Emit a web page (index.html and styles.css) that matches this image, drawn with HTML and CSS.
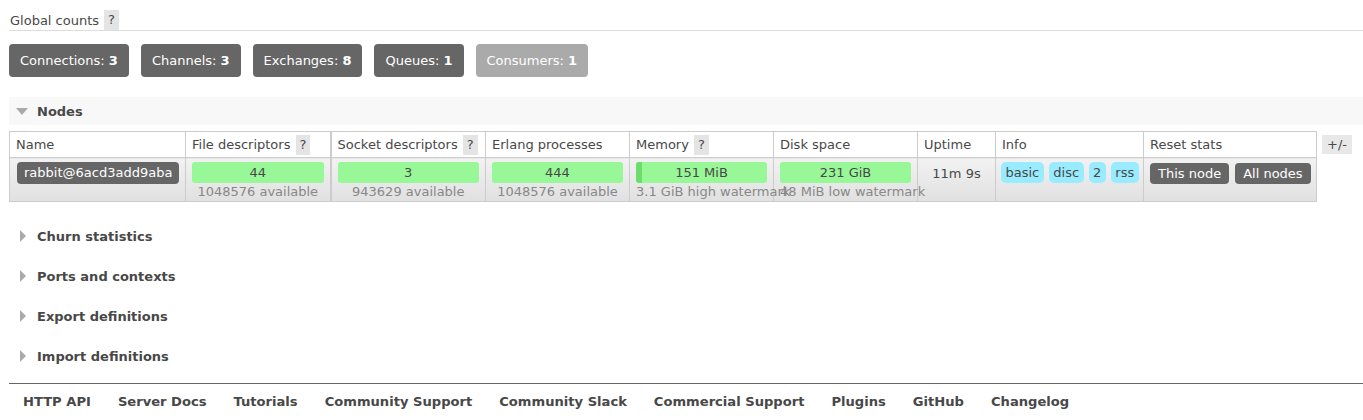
FILE: index.html
```html
<!DOCTYPE html>
<html>
<head>
<meta charset="utf-8">
<link rel="stylesheet" href="styles.css">
</head>
<body>
<div class="page">
  <div class="gc-head">
    <span class="gc-title">Global counts</span><span class="help">?</span>
  </div>
  <div class="counts">
    <span class="count">Connections: <b>3</b></span>
    <span class="count">Channels: <b>3</b></span>
    <span class="count">Exchanges: <b>8</b></span>
    <span class="count">Queues: <b>1</b></span>
    <span class="count dim">Consumers: <b>1</b></span>
  </div>

  <div class="section open">
    <span class="tri-down"></span><span class="sec-title">Nodes</span>
  </div>
  <div class="nodes">
    <table class="list">
      <colgroup>
        <col class="c-name"><col class="c-fd"><col class="c-sd"><col class="c-ep"><col class="c-mem"><col class="c-disk"><col class="c-up"><col class="c-info"><col class="c-reset">
      </colgroup>
      <thead>
        <tr>
          <th>Name</th>
          <th>File descriptors <span class="help">?</span></th>
          <th class="dbl">Socket descriptors <span class="help">?</span></th>
          <th>Erlang processes</th>
          <th>Memory <span class="help">?</span></th>
          <th>Disk space</th>
          <th>Uptime</th>
          <th>Info</th>
          <th>Reset stats</th>
        </tr>
      </thead>
      <tbody>
        <tr>
          <td><span class="node-pill">rabbit@6acd3add9aba</span></td>
          <td><div class="bar">44</div><div class="sub">1048576 available</div></td>
          <td class="dbl"><div class="bar">3</div><div class="sub">943629 available</div></td>
          <td><div class="bar">444</div><div class="sub">1048576 available</div></td>
          <td><div class="bar mem"><span class="mem-used" style="width:6px"></span>151 MiB</div><div class="sub">3.1 GiB high watermark</div></td>
          <td><div class="bar">231 GiB</div><div class="sub">48 MiB low watermark</div></td>
          <td class="uptime"><div class="uptime-text">11m 9s</div></td>
          <td><div class="badges"><span class="badge">basic</span><span class="badge">disc</span><span class="badge">2</span><span class="badge">rss</span></div></td>
          <td><div class="btns"><span class="btn">This node</span><span class="btn">All nodes</span></div></td>
        </tr>
      </tbody>
    </table>
    <span class="plusminus">+/-</span>
  </div>

  <div class="section"><span class="tri-right"></span><span class="sec-title">Churn statistics</span></div>
  <div class="section"><span class="tri-right"></span><span class="sec-title">Ports and contexts</span></div>
  <div class="section"><span class="tri-right"></span><span class="sec-title">Export definitions</span></div>
  <div class="section"><span class="tri-right"></span><span class="sec-title">Import definitions</span></div>

  <div class="footer">
    <a>HTTP API</a><a>Server Docs</a><a>Tutorials</a><a>Community Support</a><a>Community Slack</a><a>Commercial Support</a><a>Plugins</a><a>GitHub</a><a>Changelog</a>
  </div>
</div>
</body>
</html>
```
FILE: styles.css
```css
html, body {
  margin: 0;
  padding: 0;
  background: #fff;
}
body {
  font-family: "DejaVu Sans", Verdana, sans-serif;
  font-size: 13px;
  color: #484848;
}
.page {
  padding: 10px 0 0 9px;
}
.gc-head {
  display: flex;
  align-items: center;
  height: 20px;
  border-bottom: 1px solid #ddd;
  padding-left: 1px;
}
.gc-title {
  margin-right: 5px;
}
.help {
  display: inline-block;
  background: #e4e4e4;
  color: #484848;
  padding: 0 4px;
  line-height: 20px;
  height: 20px;
}
.counts {
  display: flex;
  gap: 12px;
  margin-top: 13px;
}
.count {
  background: #666;
  color: #fff;
  border-radius: 4px;
  padding: 0 11px;
  height: 33px;
  line-height: 33px;
  white-space: nowrap;
}
.count.dim {
  background: #aaa;
}
.section {
  display: flex;
  align-items: center;
  height: 28px;
  margin-top: 12px;
}
.section.open {
  background: #f8f8f8;
  margin-top: 20px;
}
.sec-title {
  font-weight: bold;
  font-size: 13px;
  color: #484848;
}
.tri-down {
  width: 0;
  height: 0;
  border-left: 6px solid transparent;
  border-right: 6px solid transparent;
  border-top: 7px solid #aaa;
  margin: 0 9px 0 7px;
}
.tri-right {
  width: 0;
  height: 0;
  border-top: 6px solid transparent;
  border-bottom: 6px solid transparent;
  border-left: 6px solid #aaa;
  margin: 0 11px 0 11px;
}
.nodes {
  display: flex;
  align-items: flex-start;
  gap: 5px;
  margin-top: 6px;
  margin-bottom: 20px;
}
table.list {
  border-collapse: collapse;
  table-layout: fixed;
  width: 1307px;
  border: 1px solid #ccc;
}
.c-name { width: 176px; }
.c-fd { width: 145px; }
.c-sd { width: 155px; }
.c-ep { width: 144px; }
.c-mem { width: 144px; }
.c-disk { width: 144px; }
.c-up { width: 78px; }
.c-info { width: 148px; }
.c-reset { width: 173px; }
table.list th {
  font-weight: normal;
  text-align: left;
  padding: 0 6px;
  height: 25px;
  border-left: 1px solid #ccc;
  border-bottom: 1px solid #ccc;
  white-space: nowrap;
  background: #fff;
}
table.list th .help {
  margin-left: 1px;
}
table.list th.dbl, table.list td.dbl {
  border-left: 2px solid #ccc;
}
table.list td {
  vertical-align: top;
  padding: 3px 6px 0 6px;
  height: 40px;
  border-left: 1px solid #ccc;
  background: linear-gradient(#f2f2f2, #e0e0e0);
  white-space: nowrap;
}
table.list td.uptime {
  text-align: center;
}
.uptime-text {
  line-height: 21px;
  margin-top: 2px;
}
.node-pill {
  display: inline-block;
  background: #666;
  color: #fff;
  border-radius: 4px;
  padding: 0 7px;
  line-height: 22px;
  margin-top: 1px;
  margin-left: 1px;
}
.bar {
  position: relative;
  background: #98f898;
  border-radius: 3px;
  text-align: center;
  line-height: 21px;
  height: 21px;
  margin-top: 1px;
  overflow: hidden;
}
.mem-used {
  position: absolute;
  left: 0;
  top: 0;
  bottom: 0;
  background: #6cdc6c;
}
.sub {
  color: #888;
  line-height: 17px;
  text-align: center;
}
.badges {
  display: flex;
  gap: 5px;
  margin-top: 1px;
  margin-left: -1px;
}
.badge {
  background: #99ebff;
  border-radius: 5px;
  padding: 0 4.5px;
  line-height: 21px;
}
.btns {
  display: flex;
  gap: 6px;
  margin-top: 2px;
}
.btn {
  background: #666;
  color: #fff;
  border-radius: 4px;
  padding: 0 8px;
  line-height: 21px;
}
.plusminus {
  display: inline-block;
  background: #e8e8e8;
  padding: 0 5px;
  line-height: 19px;
  margin-top: 4px;
}
.footer {
  margin-top: 13px;
  border-top: 1px solid #666;
  display: flex;
  padding: 8px 0 0 14px;
}
.footer a {
  font-weight: bold;
  font-size: 13.1px;
  color: #484848;
  margin-right: 27px;
  line-height: 20px;
}
```
